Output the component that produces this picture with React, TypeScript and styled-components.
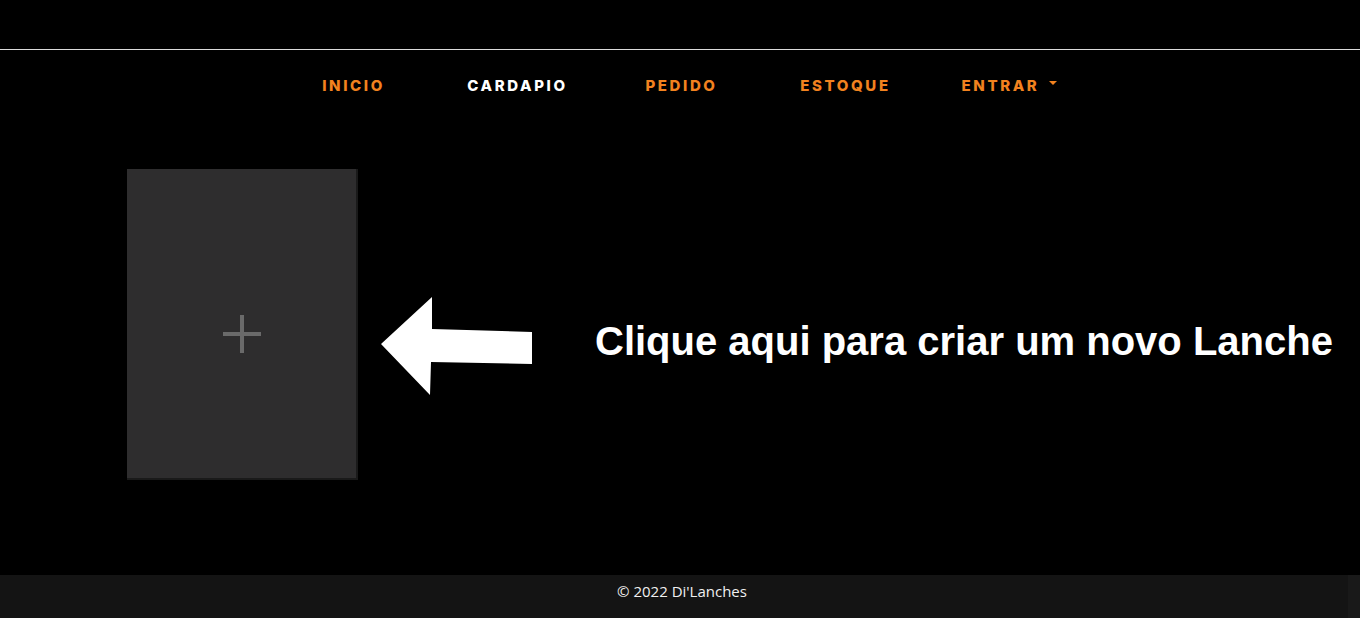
import React from "react";
import styled, { createGlobalStyle } from "styled-components";

const GlobalStyle = createGlobalStyle`
  html, body { margin: 0; padding: 0; background: #000; }
  body { font-family: "Liberation Sans", Arial, sans-serif; }
  * { box-sizing: border-box; }
`;

const Page = styled.div`
  width: 1360px;
  height: 618px;
  display: flex;
  flex-direction: column;
  background: #000;
  overflow: hidden;
`;

const TopBar = styled.header`
  height: 50px;
  flex: none;
  border-bottom: 1px solid #dcdcdc;
`;

const Nav = styled.nav`
  height: 70px;
  flex: none;
  display: grid;
  grid-template-columns: repeat(5, 164px);
  justify-content: center;
  align-items: center;
  padding-left: 3px;
`;

const NavItem = styled.a<{ $active?: boolean }>`
  display: flex;
  justify-content: center;
  align-items: center;
  gap: 10px;
  font-family: "Inter", "Noto Sans", sans-serif;
  font-weight: 800;
  font-size: 15px;
  letter-spacing: 2.6px;
  color: ${(p) => (p.$active ? "#ffffff" : "#f2821f")};
  text-decoration: none;
  cursor: pointer;
`;

const Caret = styled.span`
  width: 0;
  height: 0;
  border-left: 4.5px solid transparent;
  border-right: 4.5px solid transparent;
  border-top: 4.5px solid #f2821f;
  margin-top: -4px;
`;

const Main = styled.main`
  flex: 1;
  display: flex;
  align-items: flex-start;
  padding: 49px 0 0 127px;
`;

const AddCard = styled.button`
  width: 231px;
  height: 311px;
  flex: none;
  background: #2e2d2e;
  border: none;
  border-right: 2px solid #1a1a1a;
  border-bottom: 2px solid #1a1a1a;
  display: flex;
  align-items: center;
  justify-content: center;
  padding: 20px 0 0 0;
  cursor: pointer;
`;

const Arrow = styled.svg`
  flex: none;
  margin: 127px 0 0 22px;
`;

const Hint = styled.h2`
  margin: 152px 0 0 62px;
  font-family: "Liberation Sans", Arial, sans-serif;
  font-weight: 700;
  font-size: 40px;
  line-height: 40px;
  color: #fff;
  white-space: nowrap;
`;

const Footer = styled.footer`
  height: 43px;
  flex: none;
  display: flex;
  background: #141414;
`;

const FooterText = styled.div`
  flex: 1;
  display: flex;
  justify-content: center;
  padding: 6px 0 0 16px;
  font-family: "Open Sans", "Noto Sans", sans-serif;
  font-size: 15px;
  line-height: 20px;
  color: #f0f0f0;
`;

const Gutter = styled.div`
  width: 12px;
  background: #191919;
`;

export default function App() {
  return (
    <>
      <GlobalStyle />
      <Page>
        <TopBar />
        <Nav>
          <NavItem>INICIO</NavItem>
          <NavItem $active>CARDAPIO</NavItem>
          <NavItem>PEDIDO</NavItem>
          <NavItem>ESTOQUE</NavItem>
          <NavItem>
            ENTRAR
            <Caret />
          </NavItem>
        </Nav>
        <Main>
          <AddCard aria-label="Adicionar lanche">
            <svg width="38" height="38" viewBox="0 0 38 38">
              <rect x="17" y="0" width="4" height="38" fill="#6a6a6a" />
              <rect x="0" y="17" width="38" height="4" fill="#6a6a6a" />
            </svg>
          </AddCard>
          <Arrow width="153" height="100" viewBox="0 0 153 100">
            <polygon
              points="1,48 52,1 52,33 152,36 152,68 51,66 50,99"
              fill="#fff"
            />
          </Arrow>
          <Hint>Clique aqui para criar um novo Lanche</Hint>
        </Main>
        <Footer>
          <FooterText>© 2022 Di'Lanches</FooterText>
          <Gutter />
        </Footer>
      </Page>
    </>
  );
}
